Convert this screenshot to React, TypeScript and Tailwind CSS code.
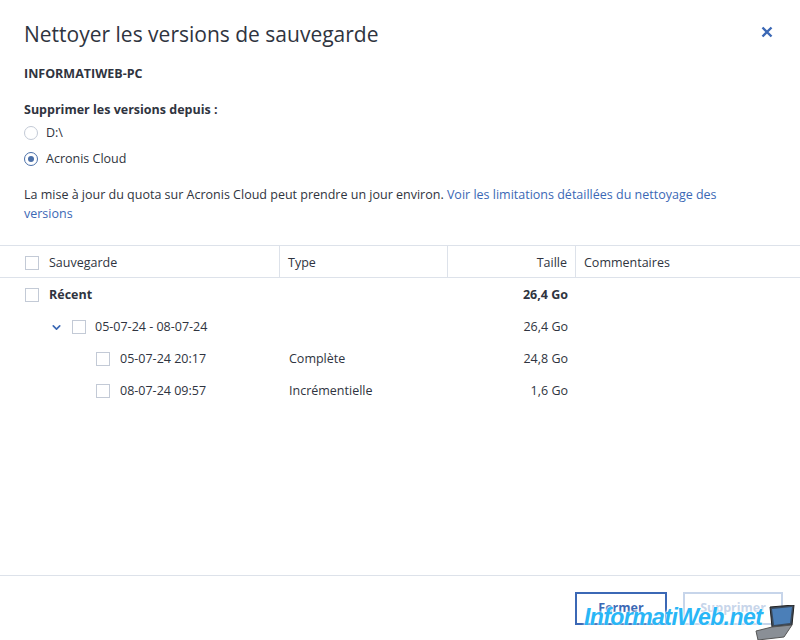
import { ChevronDown } from "lucide-react";

const font = { fontFamily: '"Open Sans", "Noto Sans", sans-serif' };

function Box() {
  return <span className="inline-block w-[14px] h-[14px] border border-[#c3cad6] bg-white shrink-0" />;
}

function Radio({ checked }: { checked?: boolean }) {
  return (
    <span
      className={
        "w-[14px] h-[14px] rounded-full border flex items-center justify-center shrink-0 " +
        (checked ? "border-[#4a6fa8]" : "border-[#c3cad6]")
      }
    >
      {checked && <span className="w-[6px] h-[6px] rounded-full bg-[#4a6fa8]" />}
    </span>
  );
}

const rows = [
  { name: "Récent", type: "", size: "26,4 Go", level: 0, bold: true },
  { name: "05-07-24 - 08-07-24", type: "", size: "26,4 Go", level: 1 },
  { name: "05-07-24 20:17", type: "Complète", size: "24,8 Go", level: 2 },
  { name: "08-07-24 09:57", type: "Incrémentielle", size: "1,6 Go", level: 2 },
];

export default function App() {
  return (
    <div className="w-[800px] h-[640px] bg-white text-[#2f3440] relative flex flex-col overflow-hidden" style={font}>
      <div className="px-6 pt-[19px] flex items-start justify-between">
        <h1 className="text-[21px] leading-[30px] text-[#2f3440]">Nettoyer les versions de sauvegarde</h1>
        <button className="mt-[7px] mr-[3px] text-[#3b68b5]">
          <svg width="12" height="12" viewBox="0 0 12 12">
            <path d="M1.5 1.5 L10.5 10.5 M10.5 1.5 L1.5 10.5" stroke="currentColor" strokeWidth="2.4" />
          </svg>
        </button>
      </div>

      <div className="px-6 text-[12.5px]">
        <p className="font-bold mt-[15px] leading-[20px]">INFORMATIWEB-PC</p>
        <p className="font-bold mt-[16px] leading-[20px]">Supprimer les versions depuis :</p>
        <div className="flex items-center gap-2 h-[24px] mt-[1px]">
          <Radio />
          <span>D:\</span>
        </div>
        <div className="flex items-center gap-2 h-[28px]">
          <Radio checked />
          <span>Acronis Cloud</span>
        </div>
        <p className="mt-[12px] leading-[19px] pr-4">
          La mise à jour du quota sur Acronis Cloud peut prendre un jour environ.{" "}
          <a className="text-[#3b68b5]">Voir les limitations détaillées du nettoyage des versions</a>
        </p>
      </div>

      <div className="mt-[22px] text-[12.5px]">
        <div className="grid grid-cols-[280px_168px_128px_1fr] h-[33px] border-y border-[#dde2ea]">
          <div className="flex items-center gap-[10px] pl-[25px] pt-[3px] border-r border-[#dde2ea]">
            <Box />
            <span>Sauvegarde</span>
          </div>
          <div className="flex items-center pl-[8px] pt-[3px] border-r border-[#dde2ea]">Type</div>
          <div className="flex items-center justify-end pr-[8px] pt-[3px] border-r border-[#dde2ea]">Taille</div>
          <div className="flex items-center pl-[8px] pt-[3px]">Commentaires</div>
        </div>
        {rows.map((r) => (
          <div key={r.name} className="grid grid-cols-[280px_168px_128px_1fr] h-[32px] pt-[2px]">
            <div
              className={
                "flex items-center " +
                (r.level === 0 ? "pl-[25px] gap-[10px]" : r.level === 1 ? "pl-[50px] gap-[8px]" : "pl-[96px] gap-[10px]")
              }
            >
              {r.level === 1 && <ChevronDown size={13} strokeWidth={3} className="text-[#3b68b5] mr-[1px]" />}
              <Box />
              <span className={(r.bold ? "font-bold" : "") + (r.level === 1 ? " ml-[1px]" : "")}>{r.name}</span>
            </div>
            <div className="flex items-center pl-[9px]">{r.type}</div>
            <div className={"flex items-center justify-end pr-[8px] " + (r.bold ? "font-bold" : "")}>{r.size}</div>
            <div />
          </div>
        ))}
      </div>

      <div className="mt-auto border-t border-[#dde2ea] h-[65px] flex items-start justify-end gap-[16px] pt-[16px] pr-[17px] text-[12.5px]">
        <button className="w-[92px] h-[33px] border-2 border-[#3b68b5] text-[#3b68b5] font-bold">Fermer</button>
        <button className="w-[100px] h-[33px] border-2 border-[#c7d5ea] text-[#c7d5ea] font-bold">Supprimer</button>
      </div>

      <div className="absolute left-[584px] top-[600px] flex items-end pointer-events-none">
        <span
          className="text-[23px] italic font-bold text-[#29b6f6] tracking-tight"
          style={{ fontFamily: '"Liberation Sans", Arial, sans-serif', textShadow: "0 0 2px #fff, 0 0 3px #fff" }}
        >
          InformatiWeb.net
        </span>
        <svg width="42" height="36" viewBox="0 0 42 36" className="-ml-[8px] -mb-[6px]">
          <polygon points="16,2 40,0 38,20 18,22" fill="#3b4a5c" stroke="#222" strokeWidth="1" />
          <polygon points="18,4 38,2 36,18 20,20" fill="#4b7fb8" />
          <polygon points="2,26 18,22 38,20 30,32 4,35" fill="#8a8f96" stroke="#555" strokeWidth="1" />
        </svg>
      </div>
    </div>
  );
}
